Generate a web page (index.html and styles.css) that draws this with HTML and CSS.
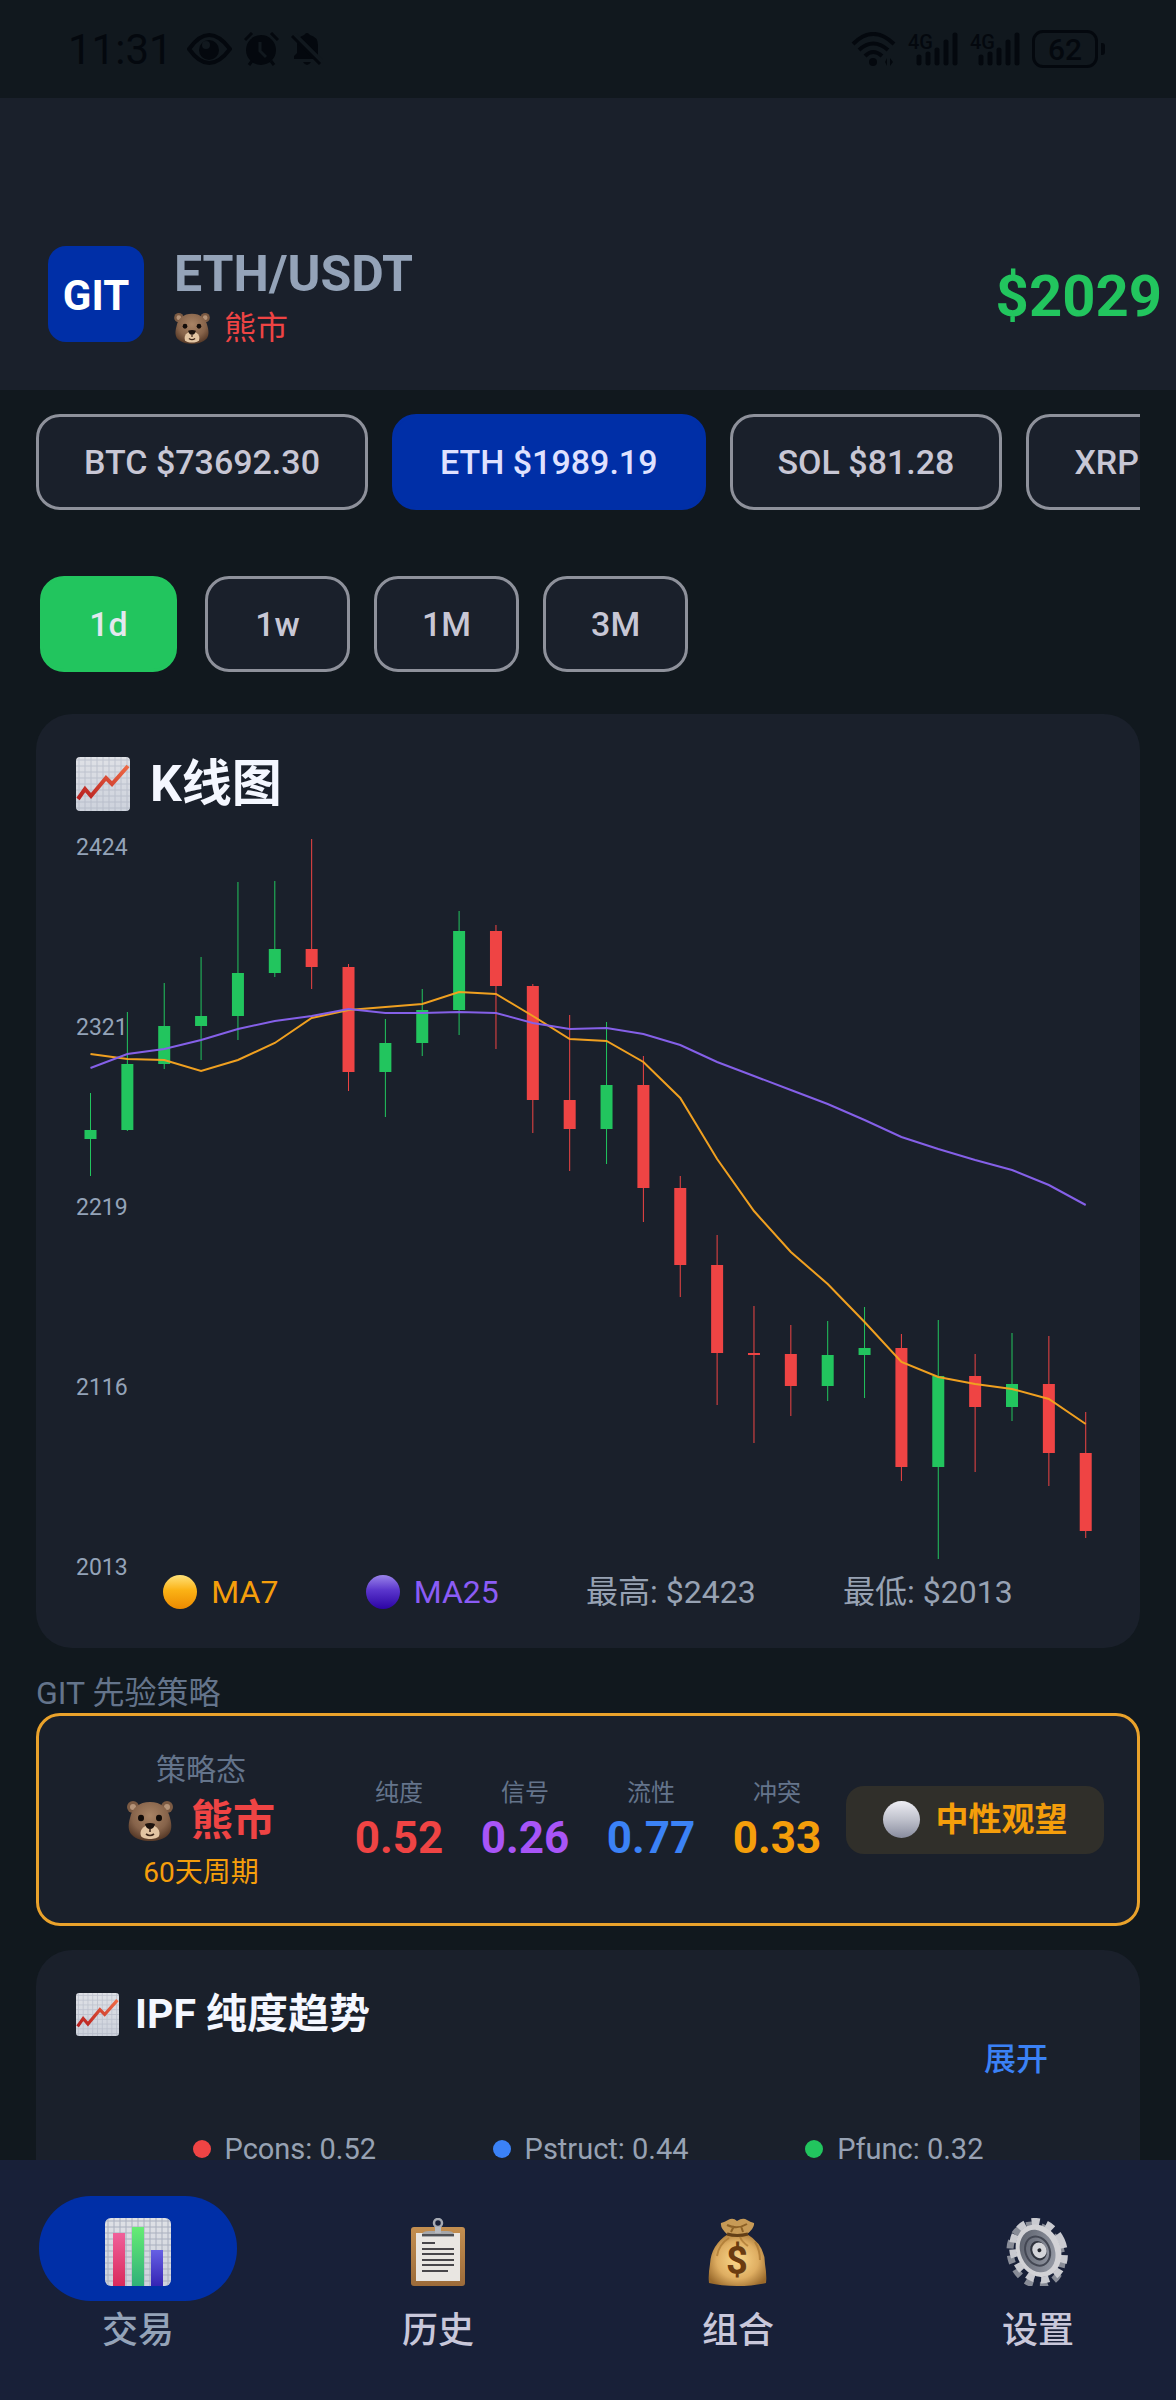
FILE: index.html
```html
<!DOCTYPE html>
<html lang="zh-CN">
<head>
    <meta charset="UTF-8">
    <meta name="viewport" content="width=device-width, initial-scale=1">
    <title>GIT</title>
    <link rel="stylesheet" href="styles.css">
</head>
<body>

<!-- shared icons -->
<svg class="defs" aria-hidden="true">
    <defs>
        <linearGradient id="paper" x1="0" y1="0" x2="0" y2="1">
            <stop offset="0" stop-color="#dfe1e6"/>
            <stop offset="1" stop-color="#cdd2dc"/>
        </linearGradient>
        <linearGradient id="rise" x1="0" y1="1" x2="1" y2="0">
            <stop offset="0" stop-color="#b81f1f"/>
            <stop offset="1" stop-color="#ee6a45"/>
        </linearGradient>
        <pattern id="grid" width="6" height="6" patternUnits="userSpaceOnUse">
            <path d="M3 0V6M0 3H6" stroke="#aab0bf" stroke-width="1" fill="none"/>
        </pattern>
        <linearGradient id="pink" x1="0" y1="0" x2="0" y2="1">
            <stop offset="0" stop-color="#f0609a"/>
            <stop offset="1" stop-color="#d92a5c"/>
        </linearGradient>
        <linearGradient id="green" x1="0" y1="0" x2="0" y2="1">
            <stop offset="0" stop-color="#66ec74"/>
            <stop offset="1" stop-color="#2fb079"/>
        </linearGradient>
        <linearGradient id="indigo" x1="0" y1="0" x2="0" y2="1">
            <stop offset="0" stop-color="#6660e4"/>
            <stop offset="1" stop-color="#3424b4"/>
        </linearGradient>
        <linearGradient id="wood" x1="0" y1="0" x2="0" y2="1">
            <stop offset="0" stop-color="#c48f50"/>
            <stop offset="1" stop-color="#9c6b3a"/>
        </linearGradient>
        <radialGradient id="fur" cx=".5" cy=".35" r=".65">
            <stop offset="0" stop-color="#a98465"/>
            <stop offset=".65" stop-color="#86634a"/>
            <stop offset="1" stop-color="#573a28"/>
        </radialGradient>
        <radialGradient id="bag" cx=".5" cy=".5" r=".6">
            <stop offset="0" stop-color="#fbd98c"/>
            <stop offset=".6" stop-color="#dfae62"/>
            <stop offset="1" stop-color="#9a6a2c"/>
        </radialGradient>
        <linearGradient id="steel" x1="0" y1="0" x2="1" y2="1">
            <stop offset="0" stop-color="#555a66"/>
            <stop offset="1" stop-color="#9ea2ad"/>
        </linearGradient>
        <symbol id="icon-trend" viewBox="0 0 54 54">
            <rect width="54" height="54" rx="4" fill="url(#paper)"/>
            <rect width="54" height="54" rx="4" fill="url(#grid)" opacity=".6"/>
            <path d="M2 42L9 32L15 39L30 21L36 27L52 9" fill="none" stroke="url(#rise)" stroke-width="4"/>
        </symbol>
        <symbol id="icon-bear" viewBox="0 0 46 40">
            <circle cx="6" cy="6" r="6" fill="#7b5a43"/>
            <circle cx="40" cy="6" r="6" fill="#7b5a43"/>
            <circle cx="6" cy="6" r="3" fill="#b59479"/>
            <circle cx="40" cy="6" r="3" fill="#b59479"/>
            <path d="M23 1C34 1 41 7 43 17C45 24 45 30 41 34C37 38 30 40 23 40C16 40 9 38 5 34C1 30 1 24 3 17C5 7 12 1 23 1Z" fill="url(#fur)"/>
            <path d="M23 24C30 24 34 30 32 35C30 39 16 39 14 35C12 30 16 24 23 24Z" fill="#e3c5a3"/>
            <path d="M18 23Q23 21 28 23Q27 28 23 28Q19 28 18 23Z" fill="#1c130f"/>
            <path d="M23 28V31M19 33Q23 36 27 33" stroke="#40291c" stroke-width="1.6" fill="none"/>
            <ellipse cx="14" cy="17" rx="3" ry="3.2" fill="#120c09"/>
            <ellipse cx="32" cy="17" rx="3" ry="3.2" fill="#120c09"/>
        </symbol>
        <symbol id="icon-signal" viewBox="0 0 44 34">
            <path d="M5 25V31M14 22V31M23 18V31M32 10V31M41 3V31" stroke="currentColor" stroke-width="5" stroke-linecap="round"/>
        </symbol>
    </defs>
</svg>

<div class="app">
    <div class="status-bar">
        <div class="status-left">
            <span class="clock">11:31</span>
            <svg width="45" height="34" viewBox="0 0 45 34">
                <path d="M2 17Q22 -11 43 17Q22 45 2 17Z" fill="none" stroke="currentColor" stroke-width="4"/>
                <circle cx="22" cy="18" r="10" fill="currentColor"/>
                <circle cx="19" cy="13" r="4" fill="#11181e"/>
            </svg>
            <svg width="35" height="34" viewBox="0 0 35 34">
                <circle cx="17" cy="18" r="15" fill="currentColor"/>
                <path d="M1 8L8 1M34 8L27 1M5 33L8 29M30 33L27 29" stroke="currentColor" stroke-width="3"/>
                <path d="M16 10V19L22 25" fill="none" stroke="#11181e" stroke-width="3"/>
            </svg>
            <svg width="32" height="34" viewBox="0 0 32 34">
                <path d="M3 27V24L6 21V13Q6 5 13 3Q16 -1 19 3Q27 5 27 13V27ZM12 30H20Q16 36 12 30Z" fill="currentColor"/>
                <path d="M3 3L31 31" stroke="#11181e" stroke-width="6"/>
                <path d="M1 4L29 32" stroke="currentColor" stroke-width="3"/>
            </svg>
        </div>
        <div class="status-right">
            <svg width="45" height="34" viewBox="0 0 45 34">
                <path d="M2 12Q22 -8 43 12M8 18Q22 5 37 18M14 24Q22 16 31 24" fill="none" stroke="currentColor" stroke-width="4"/>
                <circle cx="22" cy="30" r="4" fill="currentColor"/>
                <path d="M34 30L36 26V34ZM42 30L39 26V34Z" fill="currentColor"/>
            </svg>
            <div class="signal-bars">
                <span class="net">4G</span>
                <svg width="44" height="34"><use href="#icon-signal"/></svg>
            </div>
            <div class="signal-bars">
                <span class="net">4G</span>
                <svg width="44" height="34"><use href="#icon-signal"/></svg>
            </div>
            <div class="battery">62</div>
        </div>
    </div>

    <header class="header">
        <div class="logo">GIT</div>
        <div class="pair">
            <h1>ETH/USDT</h1>
            <div class="market"><svg width="36" height="31"><use href="#icon-bear"/></svg>熊市</div>
        </div>
        <div class="price">$2029</div>
    </header>

    <main class="content">
        <div class="chips coins">
            <button class="chip">BTC $73692.30</button>
            <button class="chip chip-blue">ETH $1989.19</button>
            <button class="chip">SOL $81.28</button>
            <button class="chip">XRP</button>
        </div>

        <div class="chips periods">
            <button class="chip chip-green">1d</button>
            <button class="chip">1w</button>
            <button class="chip">1M</button>
            <button class="chip">3M</button>
        </div>

        <section class="card kline">
            <h2><svg width="54" height="54"><use href="#icon-trend"/></svg>K线图</h2>
            <svg id="chart" class="chart" viewBox="0 0 1024 740"></svg>
            <div class="legend">
                <span class="ma7"><i class="ball ball-orange"></i>MA7</span>
                <span class="ma25"><i class="ball ball-purple"></i>MA25</span>
                <span>最高: $2423</span>
                <span>最低: $2013</span>
            </div>
        </section>

        <div class="section-label">GIT 先验策略</div>
        <section class="strategy">
            <div class="state">
                <div class="state-title">策略态</div>
                <div class="state-name"><svg width="46" height="40"><use href="#icon-bear"/></svg>熊市</div>
                <div class="state-cycle">60天周期</div>
            </div>
            <div class="metrics">
                <div class="metric red"><span>纯度</span><b>0.52</b></div>
                <div class="metric violet"><span>信号</span><b>0.26</b></div>
                <div class="metric blue"><span>流性</span><b>0.77</b></div>
                <div class="metric orange"><span>冲突</span><b>0.33</b></div>
            </div>
            <div class="signal"><i class="ball ball-white"></i>中性观望</div>
        </section>

        <section class="card ipf">
            <h3><svg width="43" height="43"><use href="#icon-trend"/></svg>IPF 纯度趋势</h3>
            <button class="expand">展开</button>
            <div class="legend">
                <span><i class="dot dot-red"></i>Pcons: 0.52</span>
                <span><i class="dot dot-blue"></i>Pstruct: 0.44</span>
                <span><i class="dot dot-green"></i>Pfunc: 0.32</span>
            </div>
        </section>
    </main>

    <nav class="tabs">
        <button class="tab active">
            <span class="tab-icon">
                <svg width="66" height="68" viewBox="0 0 66 68">
                    <rect width="66" height="68" rx="6" fill="url(#paper)"/>
                    <rect width="66" height="68" rx="6" fill="url(#grid)"/>
                    <rect x="8" y="15" width="12" height="53" fill="url(#pink)"/>
                    <rect x="27" y="9" width="12" height="59" fill="url(#green)"/>
                    <rect x="46" y="32" width="12" height="36" fill="url(#indigo)"/>
                </svg>
            </span>
            交易
        </button>
        <button class="tab">
            <span class="tab-icon">
                <svg width="66" height="68" viewBox="0 0 66 68">
                    <rect x="6" y="9" width="54" height="59" rx="3" fill="url(#wood)"/>
                    <rect x="11" y="15" width="44" height="48" fill="#e9e6e2"/>
                    <path d="M17 19V16Q18 13 24 13H42Q48 13 49 16V19Z" fill="#a5a7ab"/>
                    <path d="M17 17H49" stroke="#4d4f54" stroke-width="2"/>
                    <circle cx="33" cy="5" r="4" fill="none" stroke="#a6aab3" stroke-width="2.5"/>
                    <rect x="30" y="9" width="6" height="6" fill="#b7bac0"/>
                    <path d="M17 25H30M17 31H49M17 36H49M17 42H49M17 47H49M17 53H43" stroke="#48464a" stroke-width="2"/>
                </svg>
            </span>
            历史
        </button>
        <button class="tab">
            <span class="tab-icon">
                <svg width="66" height="68" viewBox="0 0 66 68">
                    <path d="M23 17Q15 10 16 5Q20 4 23 2Q28 -1 32 3Q38 -1 42 2Q45 4 49 5Q50 10 41 17Z" fill="#c79a56"/>
                    <path d="M22 7Q32 12 42 6M26 14L29 8M38 14L36 8" stroke="#8d6126" stroke-width="2" fill="none"/>
                    <path d="M23 16H42Q60 27 60 46Q62 58 61 65Q48 68 32 68Q16 68 4 65Q3 58 5 46Q6 27 23 16Z" fill="url(#bag)"/>
                    <path d="M22 16Q32 19 43 16" stroke="#633f16" stroke-width="3" fill="none"/>
                    <path d="M24 20Q14 26 12 38M35 19Q37 24 43 28M50 24Q55 32 55 42" stroke="#a8752f" stroke-width="2" fill="none" opacity=".7"/>
                    <text x="32" y="56" text-anchor="middle" class="dollar">$</text>
                </svg>
            </span>
            组合
        </button>
        <button class="tab">
            <span class="tab-icon">
                <svg width="66" height="68" viewBox="0 0 66 68">
                    <g transform="rotate(-24 33 34)">
                        <ellipse cx="30" cy="36" rx="25" ry="31" fill="none" stroke="#888c97" stroke-width="7" stroke-dasharray="8 7"/>
                        <ellipse cx="34" cy="33" rx="25" ry="30" fill="none" stroke="#c9cad0" stroke-width="7" stroke-dasharray="8 7"/>
                        <ellipse cx="34" cy="33" rx="22" ry="27" fill="#d2d2d6"/>
                        <ellipse cx="33" cy="33" rx="17" ry="22" fill="url(#steel)"/>
                        <ellipse cx="33" cy="33" rx="12" ry="15" fill="none" stroke="#434753" stroke-width="2"/>
                        <ellipse cx="34" cy="33" rx="8" ry="10" fill="#30343e"/>
                        <ellipse cx="35" cy="33" rx="7" ry="8" fill="#d4d5d9"/>
                        <circle cx="35" cy="33" r="2" fill="#20232b"/>
                    </g>
                </svg>
            </span>
            设置
        </button>
    </nav>
</div>
<script src="chart.js"></script>
</body>
</html>
```

FILE: styles.css
```css
* {
    box-sizing: border-box;
}

body {
    margin: 0;
    background-color: #11181e;
    color: #97a2b3;
    font-family: Roboto, "Noto Sans CJK SC", sans-serif;
    font-size: 32px;
}

h1, h2, h3 {
    margin: 0;
}

button {
    font-family: inherit;
    border: none;
    background: none;
    padding: 0;
    cursor: pointer;
}

svg {
    flex-shrink: 0;
}

.defs {
    position: absolute;
    width: 0;
    height: 0;
}

.app {
    display: flex;
    flex-direction: column;
    height: 100vh;
}

/* status bar */
.status-bar {
    display: flex;
    justify-content: space-between;
    align-items: center;
    height: 98px;
    padding: 0 78px 0 68px;
    color: #04080e;
}

.status-left, .status-right {
    display: flex;
    align-items: center;
    gap: 12px;
}

.clock {
    font-size: 42px;
    margin-right: 2px;
}

.signal-bars {
    position: relative;
    padding-left: 6px;
}

.signal-bars svg {
    display: block;
}

.net {
    position: absolute;
    top: 0;
    left: 0;
    font-size: 20px;
    font-weight: 500;
    line-height: 20px;
}

.battery {
    position: relative;
    width: 66px;
    height: 38px;
    border: 3px solid currentColor;
    border-radius: 11px;
    font-size: 30px;
    font-weight: 500;
    line-height: 33px;
    text-align: center;
}

.battery::after {
    content: "";
    position: absolute;
    top: 10px;
    right: -10px;
    width: 4px;
    height: 12px;
    border-radius: 0 3px 3px 0;
    background-color: currentColor;
}

/* header */
.header {
    display: flex;
    align-items: center;
    gap: 30px;
    padding: 140px 14px 40px 48px;
    background-color: #1a202b;
}

.logo {
    width: 96px;
    height: 96px;
    border-radius: 18px;
    background-color: #002fa7;
    color: #fff;
    font-size: 42px;
    font-weight: 700;
    line-height: 100px;
    text-align: center;
}

.pair {
    flex: 1;
    padding-top: 4px;
}

.pair h1 {
    font-size: 50px;
    line-height: 64px;
    font-weight: 700;
    color: #94a3b8;
}

.market {
    display: flex;
    align-items: center;
    gap: 14px;
    line-height: 44px;
    color: #ef4444;
}

.price {
    padding-top: 4px;
    font-size: 58px;
    font-weight: 700;
    line-height: 64px;
    color: #22c55e;
}

/* scrolling content */
.content {
    flex: 1;
    min-height: 0;
    overflow: auto;
    scrollbar-width: none;
    padding: 24px 36px 0;
}

.chips {
    display: flex;
    gap: 24px;
    overflow-x: auto;
    scrollbar-width: none;
}

.coins {
    margin-bottom: 66px;
}

.periods {
    margin-bottom: 42px;
}

.chip {
    flex-shrink: 0;
    min-width: 145px;
    height: 96px;
    padding: 0 45px;
    border: 3px solid #8e919b;
    border-radius: 24px;
    background-color: #1a202b;
    color: #c8c7d5;
    font-size: 34px;
    font-weight: 500;
}

.chip-blue {
    border-color: #002fa7;
    background-color: #002fa7;
    color: #dfe1ff;
}

.chip-green {
    min-width: 137px;
    margin: 0 4px;
    border-color: #22c55e;
    background-color: #22c55e;
    color: #e3e8ee;
}

.card {
    border-radius: 36px;
    background-color: #1a202b;
    padding: 40px 40px 34px;
}

.kline h2 {
    display: flex;
    align-items: center;
    gap: 20px;
    height: 60px;
    font-size: 50px;
    line-height: 52px;
    color: #f4f7ff;
}

.chart {
    display: block;
    width: 100%;
    margin-top: 16px;
    overflow: visible;
}

.chart text {
    font-size: 23px;
    fill: #94a3b8;
}

.up {
    fill: #22c55e;
    stroke: #22c55e;
}

.down {
    fill: #ef4444;
    stroke: #ef4444;
}

.chart rect {
    stroke: none;
}

.chart line {
    stroke-width: 1;
}

.line-ma7, .line-ma25 {
    fill: none;
    stroke-width: 2;
}

.line-ma7 {
    stroke: #f0a020;
}

.line-ma25 {
    stroke: #8560e8;
}

.legend {
    display: flex;
    justify-content: space-evenly;
    line-height: 44px;
}

.legend span {
    display: flex;
    align-items: center;
    gap: 14px;
}

.ma7 {
    color: #f59e0b;
}

.ma25 {
    color: #8b5cf6;
}

.ball {
    width: 34px;
    height: 34px;
    border-radius: 50%;
}

.ball-orange {
    background: linear-gradient(#ffe27a, #fbb215 45%, #ec8a00);
}

.ball-purple {
    background: linear-gradient(#9a84ea, #5a35cc 45%, #2c04a4);
}

.ball-white {
    background: linear-gradient(#eeeef4, #bfc1cc 50%, #888c9e);
}

/* strategy */
.section-label {
    margin-top: 26px;
    font-size: 32px;
    line-height: 39px;
    color: #64748b;
}

.strategy {
    display: grid;
    grid-template-columns: 1fr 2fr 1fr;
    align-items: center;
    min-height: 213px;
    margin-bottom: 24px;
    padding: 0 33px;
    border: 3px solid #eaa22b;
    border-radius: 24px;
    background-color: #1a202b;
}

.state {
    padding-top: 4px;
    text-align: center;
}

.state-title {
    font-size: 30px;
    line-height: 42px;
    color: #64748b;
}

.state-name {
    display: flex;
    justify-content: center;
    align-items: center;
    gap: 18px;
    font-size: 42px;
    font-weight: 700;
    line-height: 60px;
    color: #ef4444;
}

.state-cycle {
    font-size: 28px;
    line-height: 44px;
    color: #f59e0b;
}

.metrics {
    display: grid;
    grid-template-columns: repeat(4, 1fr);
    padding: 0 6px;
}

.metric {
    text-align: center;
}

.metric span {
    display: block;
    font-size: 24px;
    line-height: 36px;
    color: #64748b;
}

.metric b {
    display: block;
    font-size: 44px;
    line-height: 54px;
}

.red {
    color: #ef4444;
}

.violet {
    color: #a855f7;
}

.blue {
    color: #3b82f6;
}

.orange {
    color: #f59e0b;
}

.signal {
    display: flex;
    justify-content: center;
    align-items: center;
    gap: 16px;
    height: 68px;
    border-radius: 18px;
    background-color: #302f2a;
    color: #f59e0b;
    font-size: 33px;
    font-weight: 700;
    line-height: 66px;
}

.signal .ball {
    width: 37px;
    height: 37px;
}

/* ipf card */
.ipf h3 {
    display: flex;
    align-items: center;
    gap: 16px;
    height: 48px;
    font-size: 41px;
    line-height: 44px;
    color: #f4f7ff;
}

.expand {
    display: block;
    margin: 0 52px 48px auto;
    font-size: 32px;
    font-weight: 500;
    line-height: 42px;
    color: #3b82f6;
}

.ipf .legend {
    font-size: 29px;
    line-height: 42px;
}

.dot {
    width: 18px;
    height: 18px;
    border-radius: 50%;
}

.dot-red {
    background-color: #ef4444;
}

.dot-blue {
    background-color: #3b82f6;
}

.dot-green {
    background-color: #22c55e;
}

/* bottom tabs */
.tabs {
    display: flex;
    gap: 24px;
    height: 240px;
    padding-top: 36px;
    background-color: #182038;
}

.tab {
    flex: 1;
    display: flex;
    flex-direction: column;
    align-items: center;
    gap: 4px;
    height: 162px;
    font-size: 36px;
    font-weight: 500;
    line-height: 52px;
    color: #c8c7da;
}

.tab-icon {
    display: flex;
    justify-content: center;
    align-items: center;
    width: 198px;
    height: 105px;
    padding-top: 6px;
    border-radius: 52px;
}

.tab.active {
    color: #94a3b8;
}

.tab.active .tab-icon {
    background-color: #002fa7;
}

.dollar {
    font-size: 38px;
    font-weight: 700;
    fill: #6b3c10;
}
```

FILE: chart.js
```js
// [up, high, low, body top, body bottom]
const candles = [
    [1, 263, 346, 300, 309], [1, 182, 301, 234, 300], [1, 153, 239, 196, 234], [1, 127, 230, 186, 196],
    [1, 52, 210, 143, 186], [1, 51, 147, 119, 143], [0, 9, 159, 119, 137], [0, 134, 261, 137, 242],
    [1, 189, 287, 213, 242], [1, 159, 226, 180, 213], [1, 81, 205, 101, 180], [0, 95, 219, 101, 156],
    [0, 154, 303, 156, 270], [0, 185, 341, 270, 299], [1, 192, 334, 255, 299], [0, 226, 392, 255, 358],
    [0, 346, 467, 358, 435], [0, 405, 575, 435, 523], [0, 476, 613, 523, 525], [0, 495, 586, 524, 556],
    [1, 491, 571, 525, 556], [1, 477, 568, 518, 525], [0, 504, 651, 518, 637], [1, 490, 729, 546, 637],
    [0, 524, 642, 546, 577], [1, 503, 591, 554, 577], [0, 506, 656, 554, 623], [0, 582, 708, 623, 701]
];
const ma7 = [224, 229, 230, 241, 230, 213, 188, 180, 177, 174, 162, 164, 186, 209, 211, 232, 268, 329,
    381, 422, 454, 492, 532, 547, 554, 559, 569, 594];
const ma25 = [238, 224, 219, 210, 199, 191, 186, 179, 183, 183, 182, 183, 193, 199, 198, 204, 215, 232,
    246, 260, 274, 290, 307, 319, 330, 340, 355, 375];
const labels = [2424, 2321, 2219, 2116, 2013];

const x = i => 14.5 + i * 36.86;
const points = list => list.map((y, i) => x(i) + "," + y).join(" ");

let html = "";
candles.forEach(([up, high, low, top, bottom], i) => {
    html += `<g class="${up ? "up" : "down"}">
        <line x1="${x(i)}" x2="${x(i)}" y1="${high}" y2="${low}"/>
        <rect x="${x(i) - 6}" y="${top}" width="12" height="${bottom - top}"/>
    </g>`;
});
html += `<polyline class="line-ma7" points="${points(ma7)}"/>`;
html += `<polyline class="line-ma25" points="${points(ma25)}"/>`;
labels.forEach((value, i) => {
    html += `<text x="0" y="${25 + i * 180}">${value}</text>`;
});
document.getElementById("chart").innerHTML = html;
```
